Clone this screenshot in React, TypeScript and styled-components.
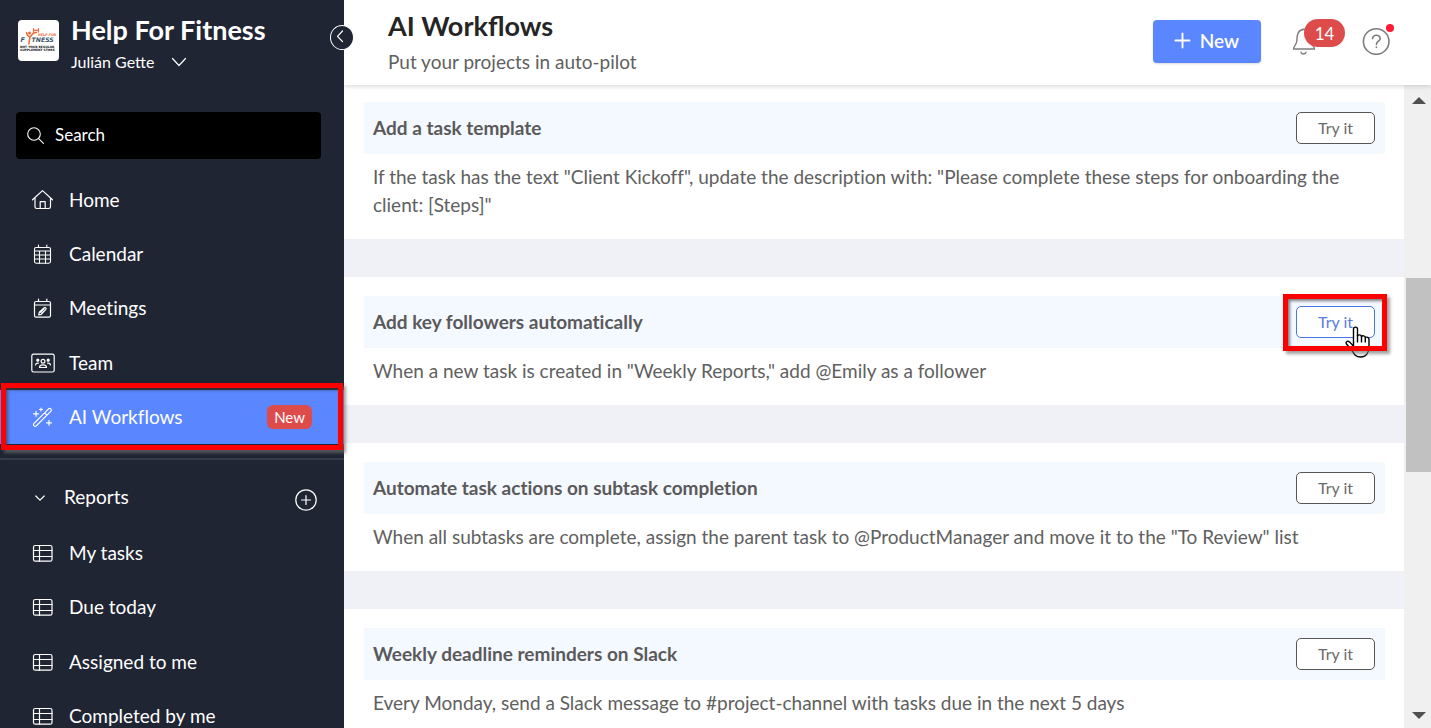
import React from "react";
import styled, { createGlobalStyle, css } from "styled-components";

const GlobalStyle = createGlobalStyle`
  *, *::before, *::after { box-sizing: border-box; }
  body { margin: 0; overflow: hidden; font-variant-ligatures: no-common-ligatures; }
  body, button, input { font-family: Lato, "Liberation Sans", sans-serif; }
  h1, h2, p, ul { margin: 0; padding: 0; }
  svg { display: block; flex: none; }
`;

const Shell = styled.div`
  display: flex;
  height: 100vh;
  background: #fff;
`;

/* ---------- sidebar ---------- */

const Sidebar = styled.aside`
  position: relative;
  z-index: 3;
  flex: none;
  width: 344px;
  background: #1f2533;
  color: #fff;
`;

const Brand = styled.div`
  display: flex;
  gap: 12px;
  height: 112px;
  padding: 14px 18px 0;
`;

const LogoBox = styled.div`
  width: 41px;
  height: 41px;
  margin-top: 6px;
  border-radius: 4px;
  background: #fff;
`;

const BrandName = styled.div`
  padding-bottom: 2px;
  font-size: 27px;
  line-height: 32px;
  font-weight: 700;
`;

const UserButton = styled.button`
  display: flex;
  align-items: center;
  gap: 17px;
  padding: 0;
  border: 0;
  background: none;
  color: #fff;
  font-size: 16px;
  line-height: 28px;
`;

const CollapseButton = styled.button`
  position: absolute;
  top: 25px;
  right: -10px;
  display: flex;
  align-items: center;
  justify-content: center;
  width: 24px;
  height: 25px;
  padding: 0 4px 4px 0;
  border: 1px solid #fff;
  border-radius: 50%;
  background: #1f2533;
  color: #fff;
`;

const SearchBox = styled.label`
  display: flex;
  align-items: center;
  gap: 11px;
  height: 47px;
  margin: 0 23px 14px 16px;
  padding: 0 11px 1px;
  border-radius: 4px;
  background: #000;
`;

const SearchInput = styled.input`
  flex: 1;
  min-width: 0;
  padding: 0 0 1px;
  border: 0;
  outline: 0;
  background: none;
  color: #fff;
  font-size: 17px;
  &::placeholder { color: #fff; opacity: 1; }
`;

const NavList = styled.ul`
  display: grid;
  grid-auto-rows: 1fr;
  list-style: none;
`;

const MainNav = styled(NavList)`
  min-height: 271px;
`;

const ReportNav = styled(NavList)`
  min-height: 217px;
`;

const NavItem = styled.li`
  position: relative;
  display: grid;
`;

const NavLink = styled.a<{ $active?: boolean }>`
  display: flex;
  align-items: center;
  gap: 14px;
  padding: 0 32px 0 31px;
  color: #fff;
  font-size: 19px;
  line-height: 24px;
  text-decoration: none;
  background: ${(p) => (p.$active ? "#5a86ff" : "none")};
`;

const NewTag = styled.span`
  margin-left: auto;
  padding: 0 7px;
  border-radius: 6px;
  background: #de4b4b;
  font-size: 15px;
  line-height: 24px;
`;

const ReportsHeader = styled.div`
  display: flex;
  align-items: center;
  height: 68px;
  margin-top: 14px;
  padding: 8px 27px 0 35px;
  border-top: 2px solid #353a47;
`;

const ReportsToggle = styled.button`
  display: flex;
  align-items: center;
  gap: 19px;
  padding: 0;
  border: 0;
  background: none;
  color: #fff;
  font-size: 19px;
  line-height: 24px;
`;

const AddButton = styled.button`
  margin: 5px 0 0 auto;
  padding: 0;
  border: 0;
  background: none;
  color: #fff;
`;

const callout = css`
  position: absolute;
  z-index: 2;
  border: 5px solid #f00;
  box-shadow: 3px 3px 3px rgba(110, 110, 110, 0.65), inset 2px 2px 3px rgba(60, 60, 60, 0.65);
  pointer-events: none;
`;

const NavCallout = styled.span`
  ${callout}
  inset: -7px 1px -6px 1px;
`;

/* ---------- main column ---------- */

const Main = styled.main`
  display: flex;
  flex: 1;
  flex-direction: column;
  min-width: 0;
`;

const Header = styled.header`
  position: relative;
  z-index: 1;
  display: flex;
  align-items: flex-start;
  flex: none;
  height: 85px;
  padding: 8px 40px 0 44px;
  background: #fff;
  box-shadow: 0 1px 5px rgba(70, 90, 85, 0.25);
`;

const Titles = styled.div`
  flex: 1;
`;

const PageTitle = styled.h1`
  color: #252525;
  font-size: 27px;
  line-height: 36px;
  font-weight: 700;
  font-variant-ligatures: common-ligatures;
`;

const Subtitle = styled.p`
  color: #606060;
  font-size: 19px;
  line-height: 36px;
`;

const NewButton = styled.button`
  display: flex;
  align-items: center;
  gap: 9px;
  height: 43px;
  margin: 12px 31px 0 0;
  padding: 0 22px 2px 21px;
  border: 0;
  border-radius: 4px;
  background: #5a86ff;
  box-shadow: 0 1px 2px rgba(0, 0, 0, 0.15);
  color: #fff;
  font-size: 19px;
  font-weight: 600;
`;

const IconButton = styled.button`
  position: relative;
  margin-top: 18px;
  padding: 0;
  border: 0;
  background: none;
  color: #7d7d7d;
`;

const BellButton = styled(IconButton)`
  margin-right: 46px;
`;

const CountBadge = styled.span`
  position: absolute;
  top: -7px;
  left: 12px;
  width: 41px;
  padding-top: 1px;
  border-radius: 14px;
  background: #de4b4b;
  color: #fff;
  font-size: 17px;
  line-height: 27px;
  text-align: center;
`;

const AlertDot = styled.span`
  position: absolute;
  top: -2px;
  right: -3px;
  width: 8px;
  height: 8px;
  border-radius: 50%;
  background: #fb1c34;
`;

const Body = styled.div`
  display: flex;
  flex: 1;
  min-height: 0;
`;

const CardList = styled.div`
  display: flex;
  flex: 1;
  flex-direction: column;
  gap: 38px;
  min-width: 0;
  overflow: hidden;
  background: #f0f1f6;
`;

const Card = styled.section`
  flex: none;
  padding: 19px 19px 20px 20px;
  background: #fff;
  &:first-child { padding-top: 17px; }
`;

const CardHead = styled.div`
  display: flex;
  align-items: center;
  justify-content: space-between;
  min-height: 52px;
  padding: 0 10px 0 9px;
  background: #f4f8ff;
`;

const CardTitle = styled.h2`
  color: #5a5a5a;
  font-size: 19px;
  line-height: 28px;
  font-weight: 700;
`;

const CardText = styled.p`
  padding: 9px 9px 0;
  color: #606060;
  font-size: 19px;
  line-height: 28px;
`;

const TrySlot = styled.span`
  position: relative;
`;

const TryButton = styled.button<{ $hot?: boolean }>`
  display: block;
  width: 79px;
  height: 32px;
  padding: 0 0 2px;
  border: 1px solid ${(p) => (p.$hot ? "#4a76e8" : "#565656")};
  border-radius: 5px;
  background: #fff;
  color: ${(p) => (p.$hot ? "#5a7de0" : "#6b6b6b")};
  font-size: 16px;
`;

const TryCallout = styled.span`
  ${callout}
  inset: -12px -12px -13px -13px;
`;

const Pointer = styled.svg`
  position: absolute;
  z-index: 1;
  top: 20px;
  left: 49px;
`;

const Scrollbar = styled.div`
  display: flex;
  flex-direction: column;
  align-items: center;
  flex: none;
  width: 27px;
  padding: 12px 0 9px 2px;
  background: #f0f0f0;
`;

const ScrollTrack = styled.div<{ $grow: number }>`
  flex: ${(p) => p.$grow} 0 0;
`;

const ScrollThumb = styled(ScrollTrack)`
  width: 25px;
  background: #c1c1c1;
`;

/* ---------- icons ---------- */

const Icon = ({ size = 24, children, weight = 1.2 }: { size?: number; weight?: number; children: React.ReactNode }) => (
  <svg width={size} height={size} viewBox={`0 0 ${size} ${size}`} fill="none" stroke="currentColor"
    strokeWidth={weight} strokeLinecap="round" strokeLinejoin="round" aria-hidden="true">
    {children}
  </svg>
);

const HomeIcon = () => (
  <Icon>
    <path d="M1.5 11.8 11.5 2.6l10 9.2M4 10v8.8c0 1 .8 1.7 1.7 1.7h12c1 0 1.8-.7 1.8-1.7V10M9.2 20.5v-6.8h5v6.8" />
  </Icon>
);

const CalendarIcon = () => (
  <Icon weight={1.1}>
    <rect x="3.5" y="5.5" width="16" height="15.7" rx="1.6" />
    <path d="M7.5 3v2.5M15.8 3v2.5M3.5 9h16M3.5 13h16M3.5 17h16M8.5 9v12M14.5 9v12" />
  </Icon>
);

const MeetingIcon = () => (
  <Icon>
    <rect x="3.5" y="5.5" width="16" height="15.7" rx="1.6" />
    <path d="M7.5 3v2.5M15.8 3v2.5M3.5 9h16" />
    <path d="m7.7 18.9.6-2.6 5-4.6c1-.8 2.4.6 1.6 1.6l-4.7 5Zm1.8-2.5 3.6-3.6M10.6 17.5l3.6-3.4" />
  </Icon>
);

const TeamIcon = () => (
  <Icon>
    <rect x="0.8" y="3.2" width="22.4" height="17.8" rx="1.8" />
    <circle cx="12" cy="10.3" r="1.9" />
    <path d="M8.5 16.5c0-3.6 7-3.6 7 0ZM4.5 14c.2-1.5 1.3-2 2.9-1.9M19.5 14c-.2-1.5-1.3-2-2.9-1.9" />
    <circle cx="6.8" cy="9.2" r="1" fill="currentColor" />
    <circle cx="17.2" cy="9.2" r="1" fill="currentColor" />
  </Icon>
);

const WandIcon = () => (
  <Icon>
    <path d="M2.8 18.6 17.6 3.8c1.7-1.3 3.5.6 2.4 2.3L5.1 21c-1.7 1.1-3.4-.7-2.3-2.4ZM13.6 7.8l2.4 2.4" />
    <path d="M5 6.3v5M2.5 8.8h5M10 3v3M8.5 4.5h3M18 15.3v5M15.5 17.8h5" />
  </Icon>
);

const TableIcon = () => (
  <Icon>
    <rect x="2.5" y="4.5" width="18.5" height="15.7" rx="1.8" />
    <path d="M8.5 4.5v15.7M2.5 9.5H21M2.5 15.5H21" />
  </Icon>
);

const Logo = () => (
  <svg width="41" height="41" viewBox="0 0 41 41" role="img" aria-label="Help For Fitness">
    <g fill="none" stroke="#f26a35" strokeLinecap="round">
      <path d="M8.500 12.500c.3 3 1.400 3.500 3.500 4.500L15.500 13l3-.5M12 17l-1.200 7" strokeWidth="1.500" />
      <path d="M15.500 8.500v3.500M20.500 8.500v3.500M15.500 10.300h5" strokeWidth="1.200" />
      <circle cx="11.500" cy="13" r="1.500" fill="#f26a35" stroke="none" />
    </g>
    <g fontFamily="'DejaVu Sans', sans-serif" fontWeight="700">
      <text x="20" y="15.500" fontSize="3.300" fontStyle="italic" fill="#f26a35">HELP FOR</text>
      <text x="2.500" y="21.500" fontSize="6.500" fontStyle="italic" fill="#3d5a6c">F</text>
      <text x="13.500" y="21.500" fontSize="6.200" fontStyle="italic" fill="#3d5a6c">TNESS</text>
      <text x="2" y="27.500" fontSize="3" fill="#111">NOT YOUR REGULAR</text>
      <text x="2" y="31.300" fontSize="3" fill="#111">SUPPLEMENT STORE</text>
    </g>
  </svg>
);

const mainItems = [
  { label: "Home", icon: <HomeIcon /> },
  { label: "Calendar", icon: <CalendarIcon /> },
  { label: "Meetings", icon: <MeetingIcon /> },
  { label: "Team", icon: <TeamIcon /> },
  { label: "AI Workflows", icon: <WandIcon />, active: true },
];

const reports = ["My tasks", "Due today", "Assigned to me", "Completed by me"];

const workflows = [
  {
    title: "Add a task template",
    text: 'If the task has the text "Client Kickoff", update the description with: "Please complete these steps for onboarding the client: [Steps]"',
  },
  {
    title: "Add key followers automatically",
    text: 'When a new task is created in "Weekly Reports," add @Emily as a follower',
    hot: true,
  },
  {
    title: "Automate task actions on subtask completion",
    text: 'When all subtasks are complete, assign the parent task to @ProductManager and move it to the "To Review" list',
  },
  {
    title: "Weekly deadline reminders on Slack",
    text: "Every Monday, send a Slack message to #project-channel with tasks due in the next 5 days",
  },
];

const HandPointer = () => (
  <Pointer width="25" height="32" viewBox="0 0 25 32" aria-hidden="true">
    <path
      d="M8.500 20V3c0-2.500 4-2.500 4 0v7c.500-1.600 3.500-1.500 4 .500 1-1.200 3.500-.8 3.800 1 1.500-1 3.700 0 3.700 2v7c0 6-3 10.500-8.500 10.500-5 0-6.500-3-8.500-6.500L1.500 18c-1.200-2.500 1.200-3.500 3-2Z"
      fill="#fff" stroke="#000" strokeWidth="1.400" strokeLinejoin="round"
    />
    <path d="M12.500 9v7.500M16.500 10.500v6M20.300 11.500v5" stroke="#000" strokeWidth="1.400" />
  </Pointer>
);

export default function App() {
  return (
    <Shell>
      <GlobalStyle />
      <Sidebar>
        <Brand>
          <LogoBox><Logo /></LogoBox>
          <div>
            <BrandName>Help For Fitness</BrandName>
            <UserButton type="button">
              Julián Gette
              <Icon size={16}><path d="m1.500 4.500 6.500 7 6.500-7" /></Icon>
            </UserButton>
          </div>
        </Brand>
        <CollapseButton type="button" aria-label="Collapse sidebar">
          <Icon size={14}><path d="M9.500 2 4.500 7.300l5 5.200" /></Icon>
        </CollapseButton>
        <SearchBox>
          <Icon size={17} weight={1.1}>
            <circle cx="7" cy="7" r="6.300" />
            <path d="m11.600 11.600 4.800 4.800" />
          </Icon>
          <SearchInput type="search" placeholder="Search" aria-label="Search" />
        </SearchBox>
        <nav>
          <MainNav>
            {mainItems.map((item) => (
              <NavItem key={item.label}>
                <NavLink href="#" $active={item.active}>
                  {item.icon}
                  {item.label}
                  {item.active && <NewTag>New</NewTag>}
                </NavLink>
                {item.active && <NavCallout />}
              </NavItem>
            ))}
          </MainNav>
          <ReportsHeader>
            <ReportsToggle type="button">
              <Icon size={10}><path d="m.8 4 4.200 4.200L9.200 4" /></Icon>
              Reports
            </ReportsToggle>
            <AddButton type="button" aria-label="Add report">
              <Icon size={22}>
                <circle cx="11" cy="11" r="10.200" />
                <path d="M11 6.500v9M6.500 11h9" />
              </Icon>
            </AddButton>
          </ReportsHeader>
          <ReportNav>
            {reports.map((label) => (
              <NavItem key={label}>
                <NavLink href="#"><TableIcon />{label}</NavLink>
              </NavItem>
            ))}
          </ReportNav>
        </nav>
      </Sidebar>
      <Main>
        <Header>
          <Titles>
            <PageTitle>AI Workflows</PageTitle>
            <Subtitle>Put your projects in auto-pilot</Subtitle>
          </Titles>
          <NewButton type="button">
            <Icon size={17} weight={1.900}><path d="M8.500 1.500v14M1.500 8.500h14" /></Icon>
            New
          </NewButton>
          <BellButton type="button" aria-label="Notifications">
            <Icon size={24} weight={1.400}>
              <path d="M1.500 23h21M1.500 23c0-2.500 3-4 3.300-8C5 8.200 6 4.200 11.500 3.200c6 .8 7 5 7.300 11.800.3 4 3.700 5.500 3.700 8" />
            </Icon>
            <Icon size={24} weight={1.400}><path d="M9 2.200c.800 2.300 4.200 2.300 5 0" /></Icon>
            <CountBadge>14</CountBadge>
          </BellButton>
          <IconButton type="button" aria-label="Help">
            <Icon size={29} weight={1.600}>
              <circle cx="14.200" cy="15.500" r="12.800" />
              <path d="M10.600 12.800c0-4.600 7.600-4.600 7.600-.4 0 2.800-3.800 2.800-3.800 6M14.400 21v.4" />
            </Icon>
            <AlertDot />
          </IconButton>
        </Header>
        <Body>
          <CardList>
            {workflows.map((flow) => (
              <Card key={flow.title}>
                <CardHead>
                  <CardTitle>{flow.title}</CardTitle>
                  <TrySlot>
                    <TryButton type="button" $hot={flow.hot}>Try it</TryButton>
                    {flow.hot && <HandPointer />}
                    {flow.hot && <TryCallout />}
                  </TrySlot>
                </CardHead>
                <CardText>{flow.text}</CardText>
              </Card>
            ))}
          </CardList>
          <Scrollbar aria-hidden="true">
            <svg width="14" height="7" viewBox="0 0 14 7"><path d="M7 0l7 7H0z" fill="#505050" /></svg>
            <ScrollTrack $grow={173} />
            <ScrollThumb $grow={194} />
            <ScrollTrack $grow={239} />
            <svg width="14" height="7" viewBox="0 0 14 7"><path d="M7 7 0 0h14z" fill="#505050" /></svg>
          </Scrollbar>
        </Body>
      </Main>
    </Shell>
  );
}
